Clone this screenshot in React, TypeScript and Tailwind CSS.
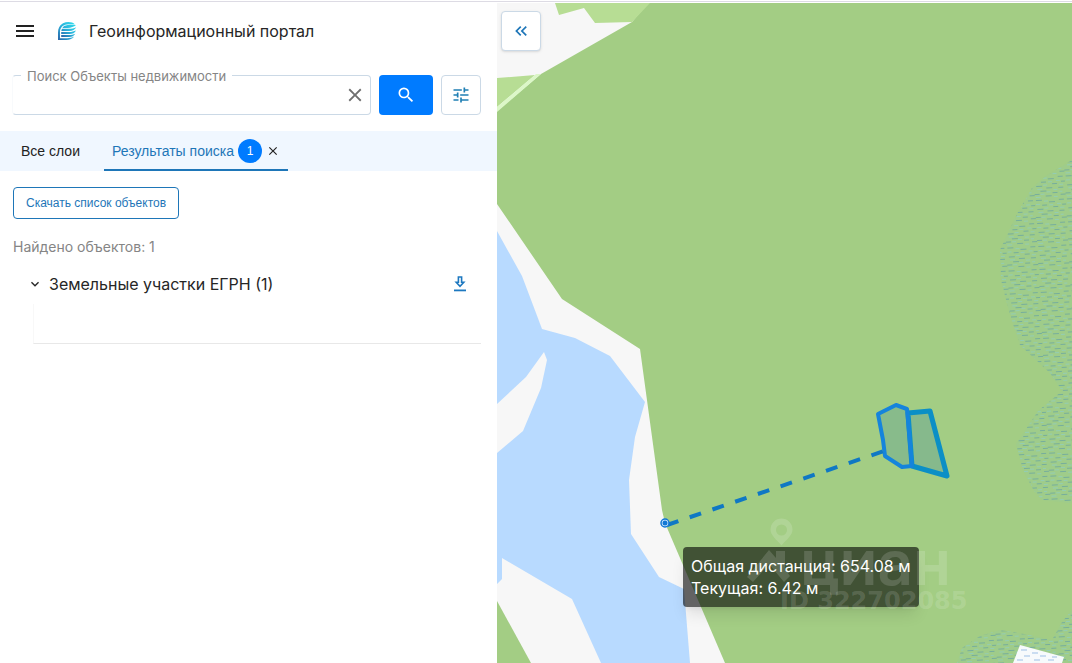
import { useState } from 'react'
import { MdClose, MdKeyboardDoubleArrowLeft, MdMenu, MdSearch, MdTune, MdExpandMore } from 'react-icons/md'

const MARSH =
  'M1072 160L1046 176L1032 188L1017 214L1000 250L1001 280L1010 315L1020 345L1050 373L1062 391L1050 401L1038 411L1016 444L1023 470L1034 491L1042 500L1072 503zM957 663L962 648L980 636L1000 630L1024 634L1052 640L1062 622L1072 610V663z'

function Logo() {
  return (
    <svg viewBox="0 0 20 20" className="size-5 shrink-0" aria-hidden="true">
      <defs>
        <linearGradient id="logo" x1="1" y1="0" x2="0" y2="1">
          <stop offset="0" stopColor="#2fdcec" />
          <stop offset="0.5" stopColor="#2ab4dc" />
          <stop offset="1" stopColor="#2b62a8" />
        </linearGradient>
      </defs>
      <path
        d="M17.800 3.200C15.500 .8 10 .4 6 2.200 2.400 4.200 1 7.600 1 11.600V19h8.400c3.400 0 6.200-1.200 7.800-3.400-2 1.200-4.400 1.600-7 1.600H3V11C3 6.200 6.600 3.200 11.600 3.200z"
        fill="url(#logo)"
      />
      <path
        d="M7 5c3.500-1.400 8-1.400 12-1-2 1.700-5 2.900-8.400 2.900H5.400zM4.900 7.800h6.600c3.200 0 5.400-.6 7.700-1.600-1 2.300-3.700 3.700-7 3.700H4.300zM4.200 10.900h7.800c2.800 0 4.900-.6 7-1.500-1 2.200-3.500 3.600-6.500 3.600H4.200zM4.200 14h7.600c2.600 0 4.700-.5 6.500-1.300-1.200 2-3.500 3.300-6.100 3.300H4.200z"
        fill="url(#logo)"
      />
    </svg>
  )
}

function DownloadIcon() {
  return (
    <svg viewBox="0 0 14 16" className="h-4 w-3.5" fill="none" stroke="#1d78c0" strokeWidth="1.6" aria-hidden="true">
      <path d="M5.400 1h3.200v5.200h2.200L7 10.400 3.200 6.200h2.200z" />
      <path d="M1 14.400h12" strokeWidth="1.8" />
    </svg>
  )
}

function SearchForm() {
  const [query, setQuery] = useState('')

  return (
    <form className="mt-4 flex gap-2 pl-3 pr-4" onSubmit={(e) => e.preventDefault()}>
      <div className="relative flex h-10 min-w-0 flex-1 items-center rounded border border-[#cbd9e6] border-l-[#f8fafc]">
        <label htmlFor="search" className="absolute -top-3 left-2 bg-white px-1.5 text-[13px] leading-6 text-[#858585]">
          Поиск Объекты недвижимости
        </label>
        <input
          id="search"
          type="text"
          value={query}
          onChange={(e) => setQuery(e.target.value)}
          className="h-full min-w-0 flex-1 bg-transparent px-3 text-sm outline-none"
        />
        <button type="button" aria-label="Очистить" onClick={() => setQuery('')} className="mr-1 text-[#6e6e6e]">
          <MdClose className="size-[22px]" />
        </button>
      </div>
      <button
        type="submit"
        aria-label="Найти"
        className="flex h-10 w-[54px] items-center justify-center rounded bg-[#007bff] text-white"
      >
        <MdSearch className="size-5" />
      </button>
      <button
        type="button"
        aria-label="Фильтры"
        className="flex size-10 items-center justify-center rounded border border-[#cbd9e6] text-[#1f7fb4]"
      >
        <MdTune className="size-5" />
      </button>
    </form>
  )
}

function Tabs() {
  return (
    <div className="mt-4 flex h-10 items-stretch bg-[#f0f7ff] pl-[13px] font-['Liberation_Sans',sans-serif] text-sm">
      <button type="button" className="px-2 text-[#222]">
        Все слои
      </button>
      <div className="ml-4 flex items-center gap-1 border-b-2 border-[#1e76b8] px-2 pt-0.5">
        <button type="button" className="flex items-center gap-1 text-[#1e76b8]">
          Результаты поиска
          <span className="flex size-6 items-center justify-center rounded-full bg-[#007bff] text-xs text-white">1</span>
        </button>
        <button type="button" aria-label="Закрыть результаты" className="text-[#222]">
          <MdClose className="size-3.5" />
        </button>
      </div>
    </div>
  )
}

function Results() {
  return (
    <div className="flex flex-col pl-[13px] pr-4 pt-4">
      <button
        type="button"
        className="h-8 self-start rounded border border-[#1e76b8] px-3 font-['Liberation_Sans',sans-serif] text-xs text-[#1e76b8]"
      >
        Скачать список объектов
      </button>
      <p className="mt-[18px] text-sm text-[#858585]">Найдено объектов: 1</p>
      <div className="mt-[15px] flex h-6 items-center px-3.5">
        <button type="button" className="flex items-center gap-1.5 text-base text-[#262626]">
          <MdExpandMore className="size-4" />
          Земельные участки ЕГРН (1)
        </button>
        <button type="button" aria-label="Скачать" className="ml-auto">
          <DownloadIcon />
        </button>
      </div>
      <div className="ml-5 mt-2 h-10 border-b border-l border-b-[#e8e8e8] border-l-[#f8f8f8]" />
    </div>
  )
}

function MapCanvas() {
  return (
    <svg
      viewBox="497 3 575 660"
      preserveAspectRatio="xMinYMin slice"
      className="absolute inset-0 size-full bg-[#f7f7f7]"
      aria-hidden="true"
    >
      <defs>
        <pattern id="marsh" width="31" height="23" patternUnits="userSpaceOnUse" patternTransform="rotate(-3)">
          <path
            d="M1 1.500h6M14 3.500h6M24 1.500h5M7 6.500h5M18 8.500h5M27 6.500h4M2 10.500h6M12 12.500h6M24 12.500h5M6 15.500h6M18 17.500h5M0 18.500h5M26 19.500h5M11 20.500h6"
            stroke="#76ae9c"
          />
          <path
            d="M9 2.500h4M1 5.500h4M14 6.500h4M22 5.500h4M9 9.500h4M25 9.500h4M3 13.500h5M19 14.500h4M12 16.500h4M25 16.500h3M6 18.500h4M19 21.500h4M1 21.500h5"
            stroke="#93cdb4"
          />
        </pattern>
      </defs>

      {/* Forest */}
      <path d="M648 3H1072V663H725L665 523L662 510L640 349L562 299L497 204V111L541 74L632 22z" fill="#a3cd84" />
      <path d="M555 3L559 15L584 8L595 23L632 22L650 3zM497 78L535 75L497 107z" fill="#b7dd94" />
      <path d="M497 107L536 74L541 74L497 112z" fill="#dcf7c8" />

      {/* Water */}
      <path
        d="M497 231L522 276L536 313L542 329L575 338L610 356L645 402L635 437L629 480L631 534L659 577L684 589L690 663H601L572 599L502 558V579L497 584V453L523 431L541 388L547 360L544 352L526 377L497 404z"
        fill="#b8daff"
      />
      <path d="M497 601L531 663H497z" fill="#a3cd84" />

      {/* Marsh */}
      <path d={MARSH} fill="#9fcc8a" />
      <path d={MARSH} fill="url(#marsh)" />
      <path d="M1020 645L1064 657L1062 663H1013z" fill="#f7fafc" />
      <path
        d="M1021 650h6M1032 653h6M1024 656h6M1040 656h6M1017 660h6M1034 660h6M1048 660h6M1052 657h5"
        stroke="#9dbfe6"
      />

      {/* Land plots */}
      <path
        d="M908 413L930 411L947 476L912 466z"
        fill="#1e74a8"
        fillOpacity="0.22"
        stroke="#0b8fc6"
        strokeWidth="5"
        strokeLinejoin="round"
      />
      <path
        d="M878 414L896 405L907 409L912 466L902 467L885 456L883 440z"
        fill="#1e74a8"
        fillOpacity="0.2"
        stroke="#1584dc"
        strokeWidth="4"
        strokeLinejoin="round"
      />

      {/* Ruler */}
      <path d="M667 525L884 451" stroke="#0f78c4" strokeWidth="4" strokeDasharray="12 12" />
      <circle cx="665" cy="523" r="4" fill="#d7ecff" stroke="#1278d4" strokeWidth="1.500" />
      <circle cx="665" cy="523" r="2.500" fill="#1278d4" />
    </svg>
  )
}

function Watermark() {
  return (
    <svg
      viewBox="497 3 575 660"
      preserveAspectRatio="xMinYMin slice"
      className="pointer-events-none absolute inset-0 size-full"
      fill="#fff"
      fillOpacity="0.15"
    >
      <path
        fillRule="evenodd"
        d="M781.500 518.500a11 11 0 0 1 11 11c0 6-6 10-11 16-5-6-11-10-11-16a11 11 0 0 1 11-11zm0 6a5.500 5.500 0 1 0 0 11 5.500 5.500 0 0 0 0-11z"
      />
      <path d="M747 577L769 550L776 558V551H785V569L790 576L784 582L769 564L753 582z" />
      <text x="800" y="585" className="text-[62px] font-semibold">
        циан
      </text>
      <text x="780" y="609" className="font-['DejaVu_Sans',sans-serif] text-2xl font-bold">
        ID 322702085
      </text>
    </svg>
  )
}

export default function App() {
  return (
    <div className="flex min-h-screen flex-col bg-white font-[Inter,sans-serif]">
      <div className="my-px h-px bg-[#dddbe4]" />
      <div className="flex flex-1">
        <aside className="w-[497px] max-w-full shrink-0">
          <header className="flex h-14 items-center pl-[13px]">
            <button type="button" aria-label="Меню" className="text-[#222]">
              <MdMenu className="size-6" />
            </button>
            <a href="#" className="ml-5 flex items-center gap-3 text-base text-[#262626]">
              <Logo />
              Геоинформационный портал
            </a>
          </header>
          <SearchForm />
          <Tabs />
          <Results />
        </aside>

        <main className="relative min-w-0 flex-1 overflow-hidden">
          <MapCanvas />
          <button
            type="button"
            aria-label="Свернуть панель"
            className="absolute left-1 top-2 flex size-10 items-center justify-center rounded border border-[#cbd9e6] bg-white text-[#1e76b8] shadow"
          >
            <MdKeyboardDoubleArrowLeft className="size-5" />
          </button>
          <div className="absolute left-[186px] top-[544px] whitespace-nowrap rounded bg-black/60 p-2 text-base leading-[22px] text-white shadow-lg">
            <p>Общая дистанция: 654.08 м</p>
            <p>Текущая: 6.42 м</p>
          </div>
          <Watermark />
        </main>
      </div>
    </div>
  )
}
